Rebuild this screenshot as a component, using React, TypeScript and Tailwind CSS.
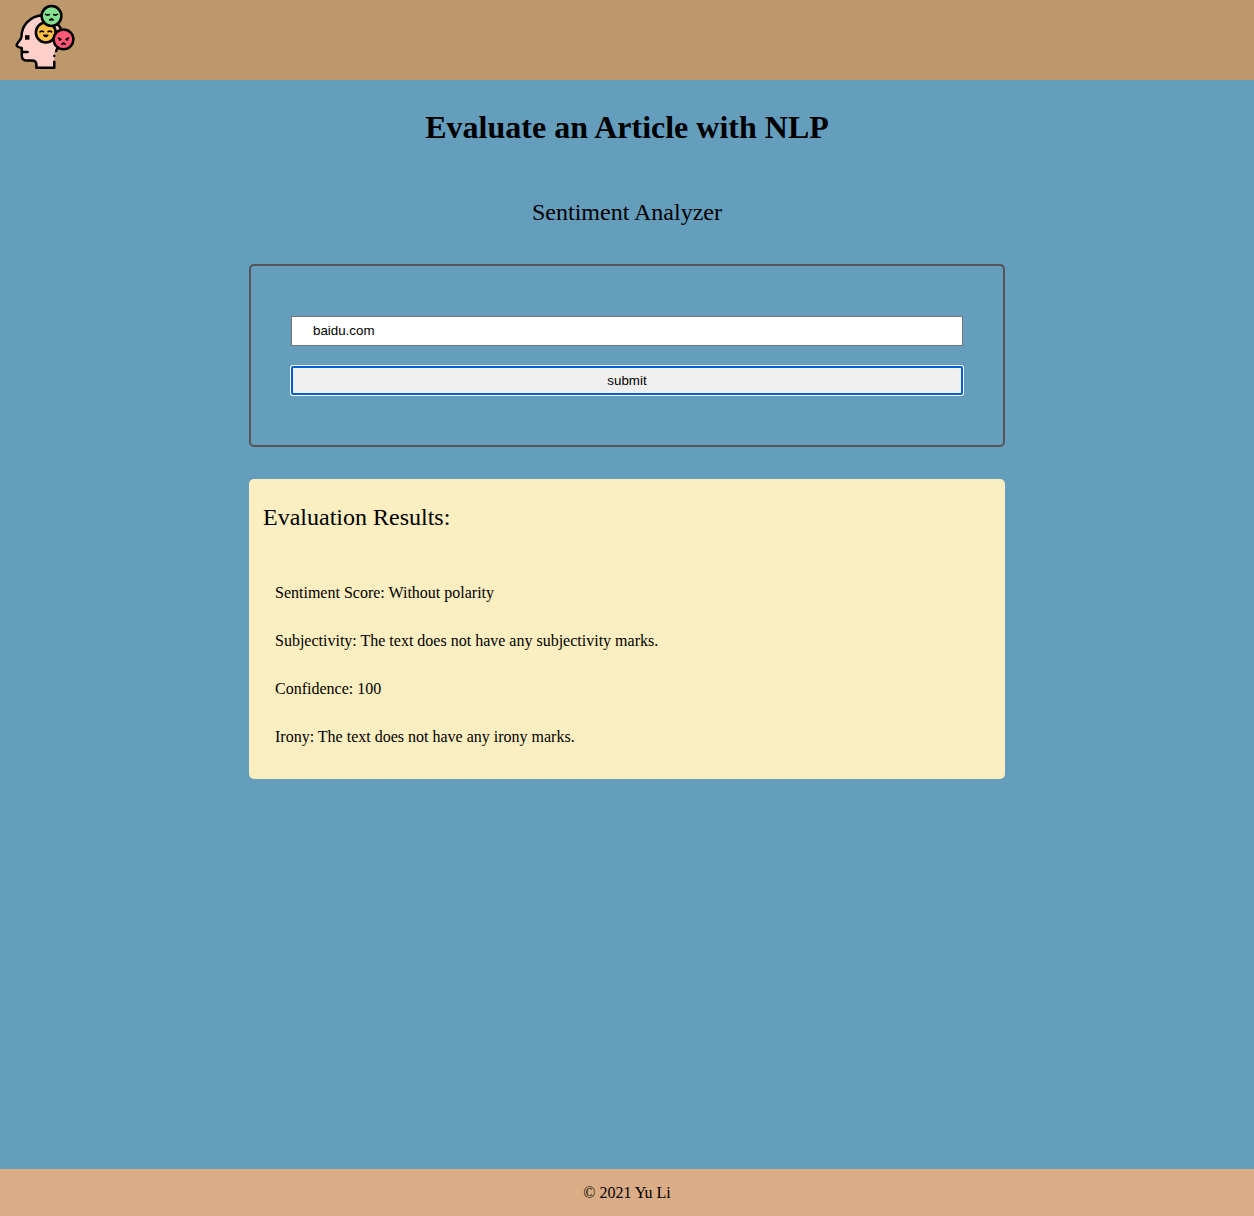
import React from "react";

type FaceProps = { x: number; y: number; fill: string; children: React.ReactNode };

function Face({ x, y, fill, children }: FaceProps) {
  return (
    <g transform={`translate(${x} ${y})`}>
      <circle r="9.9" fill={fill} stroke="#000" strokeWidth="2.5" />
      {children}
    </g>
  );
}

function Logo() {
  return (
    <svg
      className="block h-20 w-[90px]"
      viewBox="0 0 90 80"
      fill="none"
      stroke="#000"
      strokeWidth="2.5"
      strokeLinecap="round"
      strokeLinejoin="round"
      role="img"
      aria-label="Sentiment logo"
    >
      <path
        d="M42 15.3C30 16.5 21.5 25 21.5 36.5C21.5 40 17.5 41.5 16.6 45.3C17 47 19.5 47.6 21.8 48V56C22 59 24 60.6 27 60.6H32C35 60.6 36.4 62.5 36.4 65V67.8H54.3V52L57 47L60 30L56 20Z"
        fill="#ffd0c9"
        stroke="none"
      />
      <path d="M42 15.3C30 16.5 21.5 25 21.5 36.5C21.5 40 17.5 41.5 16.6 45.3C17 47 19.5 47.6 21.8 48V56C22 59 24 60.6 27 60.6H32C35 60.6 36.4 62.5 36.4 65V67.8H54.3V61.8" />
      <path d="M22 52H27.6M54.3 56V56.1M56.2 51L57 49M58 24.5L60.5 28" />
      <rect x="25" y="35.2" width="4.5" height="4.5" fill="#000" stroke="none" />
      <Face x={45.8} y={32.5} fill="#ffc143">
        <path strokeWidth="1.7" d="M-5.8 -.6Q-4 -2.2 -2.3 -.8M2.3 -.8Q4 -2.2 5.8 -.6" />
        <path strokeWidth="1.2" fill="#000" d="M-2.2 2.6H2.2Q0 5.8 -2.2 2.6Z" />
      </Face>
      <Face x={51.5} y={16} fill="#85df91">
        <path strokeWidth="1.7" d="M-5.8 -1.6Q-4 -.4 -2.2 -1.4M2.2 -1.4Q4 -.4 5.8 -1.6" />
        <path strokeWidth="1.2" fill="#000" d="M-2 4.2Q0 1.2 2 4.2Q0 3.4 -2 4.2Z" />
      </Face>
      <Face x={63.5} y={39.3} fill="#ff5977">
        <path strokeWidth="1.7" d="M-5 -1.2L-2.6 .2L-4 .6M5 -1.2L2.6 .2L4 .6" />
        <path strokeWidth="1.2" fill="#000" d="M-2 5Q0 2 2 5Q0 4.2 -2 5Z" />
      </Face>
    </svg>
  );
}

const results = [
  "Sentiment Score: Without polarity",
  "Subjectivity: The text does not have any subjectivity marks.",
  "Confidence: 100",
  "Irony: The text does not have any irony marks.",
];

export default function App() {
  return (
    <div className="flex min-h-screen flex-col bg-[#659dbd] font-['Liberation_Serif',serif] text-base text-black">
      <header className="h-20 bg-[#bd986a]">
        <Logo />
      </header>
      <main className="mx-auto flex w-[756px] flex-1 flex-col">
        <h1 className="mt-[29px] text-center text-[32px] leading-[37px] font-bold">
          Evaluate an Article with NLP
        </h1>
        <h2 className="mt-[52px] text-center text-2xl leading-7">Sentiment Analyzer</h2>
        <form
          className="mt-[38px] flex h-[183px] flex-col rounded-[5px] border-2 border-[#545454] px-10 pt-[50px] font-['Liberation_Sans',sans-serif] text-[13.333px]"
          onSubmit={(e) => e.preventDefault()}
        >
          <input
            className="h-[30px] border border-[#767676] bg-white px-[21px] pb-0.5 outline-none"
            aria-label="Article URL"
            defaultValue="baidu.com"
          />
          <button className="mt-5 h-[29px] rounded-[2px] border-2 border-[#0060cf] bg-[#efefef] leading-none ring-1 ring-white">
            submit
          </button>
        </form>
        <section className="mt-8 h-[300px] rounded-[5px] bg-[#fbeec1] px-[14px] pt-6">
          <h2 className="text-2xl leading-7">Evaluation Results:</h2>
          <div className="mt-[53px] flex flex-col gap-[30px] pl-3">
            {results.map((text) => (
              <p key={text} className="leading-[18px]">{text}</p>
            ))}
          </div>
        </section>
      </main>
      <footer className="h-[47px] bg-[#daad86] pt-[15px] text-center leading-[18px]">
        © 2021 Yu Li
      </footer>
    </div>
  );
}
